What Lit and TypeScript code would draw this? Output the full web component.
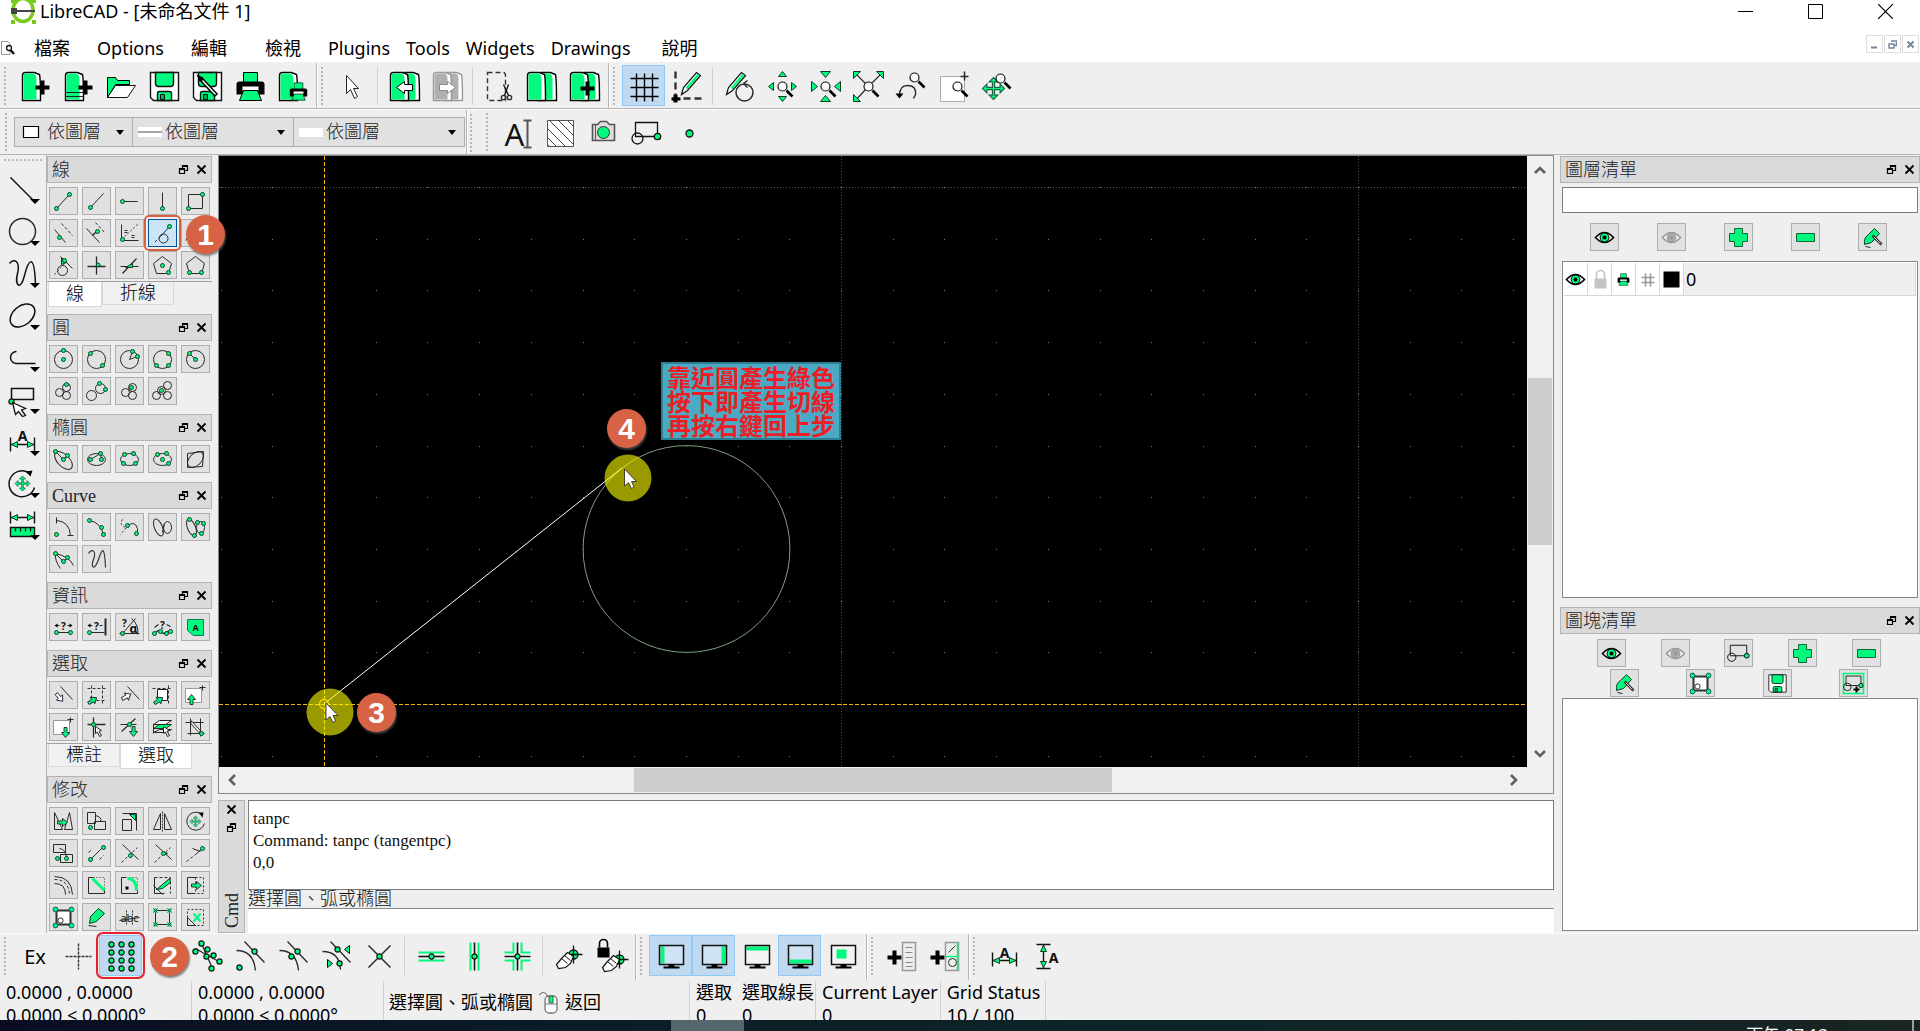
import { LitElement, html, svg, css } from "lit";
import { customElement, property } from "lit/decorators.js";
import { classMap } from "lit/directives/class-map.js";

/* ---- drawing helpers: every icon is drawn around the point 0,0 ---- */
const GREEN = "#00fa7d";
const L = (d: string, w = 1, c = "#2a2a2a") => svg`<path d=${d} fill="none" stroke=${c} stroke-width=${w}></path>`;
const D = (d: string, w = 1, a = "3 2") => svg`<path d=${d} fill="none" stroke="#333" stroke-width=${w} stroke-dasharray=${a}></path>`;
const G = (d: string, c = "#123b26") => svg`<path d=${d} fill=${GREEN} stroke=${c} stroke-width="1"></path>`;
const GL = (d: string, w = 2) => svg`<path d=${d} fill="none" stroke=${GREEN} stroke-width=${w}></path>`;
const B = (d: string) => svg`<path d=${d} fill="#000"></path>`;
const W = (d: string, c = "#222") => svg`<path d=${d} fill="#fff" stroke=${c} stroke-width="1"></path>`;
const C = (x: number, y: number, r: number, w = 1) => svg`<circle cx=${x} cy=${y} r=${r} fill="none" stroke="#2a2a2a" stroke-width=${w}></circle>`;
const E = (x: number, y: number, rx: number, ry: number, rot = 0) =>
  svg`<ellipse cx=${x} cy=${y} rx=${rx} ry=${ry} transform=${`rotate(${rot} ${x} ${y})`} fill="none" stroke="#2a2a2a"></ellipse>`;
const P = (...n: number[]) => {
  const out = [];
  for (let i = 0; i < n.length; i += 2) out.push(svg`<circle cx=${n[i]} cy=${n[i + 1]} r="2" fill=${GREEN} stroke="#14442b"></circle>`);
  return out;
};
const Q = (...n: number[]) => {
  const out = [];
  for (let i = 0; i < n.length; i += 2) out.push(svg`<circle cx=${n[i]} cy=${n[i + 1]} r="2.6" fill=${GREEN} stroke="#111" stroke-width="1.2"></circle>`);
  return out;
};
const T = (x: number, y: number, s: number, t: string, wt = "700") =>
  svg`<text x=${x} y=${y} font-size=${s} font-weight=${wt} text-anchor="middle" font-family="Noto Sans, Liberation Sans, sans-serif" fill="#111">${t}</text>`;

const page = (x: number, c = GREEN, s = "#000") => svg`
  <path d=${`M${x} -11Q${x} -14 ${x + 3} -14H${x + 12}L${x + 17} -12Q${x + 18} -8 ${x + 18} 14H${x}Z`} fill="#fff" stroke=${s} stroke-width="1.4"></path>
  <path d=${`M${x + 1} -11Q${x + 1} -13 ${x + 4} -13H${x + 11}Q${x + 14} -12 ${x + 14} -7V13H${x + 1}Z`} fill=${c}></path>`;
const plus = (x: number, y: number) => B(`M${x - 2} ${y - 7}h4v5h5v4h-5v5h-4v-5h-5v-4h5z`);
const floppy = (k: number) => svg`<g transform=${`scale(${k})`}>
  <path d="M-14 -14H14V14H-11L-14 11Z" fill="#fff" stroke="#111" stroke-width="1.4"></path>
  <path d="M-9 -14H9V-3Q9 0 6 0H-6Q-9 0 -9 -3Z" fill=${GREEN} stroke="#111" stroke-width="1.4"></path>
  <path d="M-7 14V7Q-7 5 -5 5H5Q7 5 7 7V14Z" fill=${GREEN} stroke="#111" stroke-width="1.4"></path>
  <path d="M-4 8h4v5h-4z" fill="#0a6" stroke="#111"></path></g>`;
const printer = (k: number, x = 0, y = 0) => svg`<g transform=${`translate(${x} ${y}) scale(${k})`}>
  <path d="M-7 -14H7V-3H-7Z" fill=${GREEN} stroke="#000"></path>
  <path d="M-14 -2Q-14 -5 -11 -5H11Q14 -5 14 -2V8H-14Z" fill="#000"></path>
  <path d="M-8 0H8V4H-8Z" fill="#fff"></path><path d="M-7 4H7L11 14H-11Z" fill=${GREEN} stroke="#000"></path></g>`;
const lens = (x: number, y: number) => svg`<path d=${`M${x + 4} ${y + 4}L${x + 10} ${y + 10}`} stroke="#000" stroke-width="2.6"></path>
  <circle cx=${x} cy=${y} r="4.5" fill="#fff" fill-opacity=".7" stroke="#111" stroke-width="1.2"></circle>`;
const pencil = (x: number, y: number) => svg`<path d=${`M${x} ${y}l2 -7L${x + 15} ${y - 22}l4 3L${x + 6} ${y - 4}Z`} fill="#fff" stroke="#111" stroke-width="1.2"></path>
  <path d=${`M${x + 5} ${y - 6}L${x + 17} ${y - 20}`} stroke=${GREEN} stroke-width="2.6"></path>`;
const monitor = (d: string) => [
  svg`<path d="M-12 -11H12V8H-12Z" fill="#fff" fill-opacity=".25" stroke="none"></path><path d=${d} fill=${GREEN}></path>
  <path d="M-12 -11H12V8H-12Z" fill="none" stroke="#111" stroke-width="1.5"></path>`,
  B("M-3 8H3V10H8V12H-8V10H-3Z"),
];
const ptr = (x: number, y: number, r = 0) => svg`<path transform=${`translate(${x} ${y}) rotate(${r})`} d="M0 0L6 4L3.6 4.8L6 9L4 10L2 5.6L0 7Z" fill="#fff" stroke="#222"></path>`;
const arrow = (x: number, y: number, r: number, c = GREEN) => svg`<path transform=${`translate(${x} ${y}) rotate(${r})`} d="M-5 -1.5H0V-4L5 0L0 4V1.5H-5Z" fill=${c} stroke="#223" stroke-width=".9"></path>`;
const eye = (g: string, s: string) => svg`<path d="M-9 0Q0 -10 9 0Q0 10 -9 0Z" fill="#fff" fill-opacity=".6" stroke=${s} stroke-width="1.6"></path>
  <circle r="4.4" fill=${g} stroke=${s}></circle><circle r="2" fill=${s}></circle>`;
const padlock = (x: number, y: number, c: string) => svg`<path d=${`M${x - 4} ${y}v-4a4 4 0 0 1 8 0v4`} fill="none" stroke=${c} stroke-width="1.6"></path>
  <path d=${`M${x - 6} ${y}h12v10h-12z`} fill=${c}></path>`;
const hand = (x: number, y: number) => svg`<path transform=${`translate(${x} ${y})`} d="M0 0L6 -6L9 -4L12 -2L9 5L4 9L-3 10L-5 6Z" fill="#fff" stroke="#111" stroke-width="1.2"></path><path d=${`M${x + 3} ${y - 3}l6 5M${x} ${y}l6 5`} stroke="#111"></path>`;
const target = (x: number, y: number) => [svg`<circle cx=${x} cy=${y} r="4.5" fill=${GREEN} stroke="#111" stroke-width="1.3"></circle>`, L(`M${x - 8} ${y}h17M${x} ${y - 9}v18`, 1.3, "#111")];
const blockShape = (k = 1) => svg`<g transform=${`scale(${k})`} fill="none" stroke="#111" stroke-width="1.3"><path d="M-11 -11H11V3H-11Z"></path><circle cx="-9" cy="5" r="5.5"></circle>
  <circle cx="11" cy="3" r="3.2" fill=${GREEN}></circle></g>`;
const cross4 = (x: number, y: number, k: number) => svg`<path transform=${`translate(${x} ${y}) scale(${k})`} d="M0 -10L4 -6H1V-1H6V-4L10 0L6 4V1H1V6H4L0 10L-4 6H-1V1H-6V4L-10 0L-6 -4V-1H-1V-6H-4Z" fill=${GREEN} stroke="#164" stroke-width="1"></path>`;
const pent = "M0 -9L9 -2L6 8H-6L-9 -2Z";
const corner = (x: number, y: number) => svg`<circle cx=${x} cy=${y} r="2.4" fill=${GREEN} stroke="#155"></circle>`;
const blockEdit = [svg`<path d="M-7 -7H7V7H-7Z" fill="#fff" stroke="#333" stroke-width="2"></path>`, corner(-8, -8), corner(8, -8), corner(-8, 8), corner(8, 8), C(-3, 3, 2.6)];
const marker = [G("M-8 7Q-9 0 -4 -3L2 -9L7 -4L-1 5Z"), L("M-7 9L-2 10"), L("M0 -2L9 7", 2.6), L("M1 -1L8 6", 1, "#ddd")];

const ICONS: Record<string, unknown> = {
  /* file tools */
  new: [page(-13), plus(7, 1)],
  template: [page(-13), W("M-13 6H5M-13 10H5"), plus(7, 1)],
  open: [G("M-14 11V-9H-6L-4 -6H8V-2H-6Z", "#000"), W("M-14 11L-6 -1H14L6 11Z", "#111")],
  save: floppy(1),
  saveas: [floppy(1), svg`<path d="M-7 -8L9 9" stroke="#000" stroke-width="4.4"></path><path d="M-5 -6L8 8" stroke="#fff" stroke-width="1.4"></path>`, B("M-11 -12L-4 -9L-8 -5Z")],
  print: printer(1),
  preview: [page(-14), printer(0.62, 5, 5)],
  pointer: W("M-6 -11V7L-2 3L2 12L5 10L1 2H6Z"),
  undo: [page(-3), page(-14), W("M-8 1L0 -5V-2H8V4H0V7Z", "#000")],
  redo: [page(-3, "#b0b0b0", "#999"), page(-14, "#b0b0b0", "#999"), W("M8 1L0 -5V-2H-8V4H0V7Z", "#888")],
  cut: [D("M-12 -14H4Q6 -14 6 -10V14H-12Z", 1.4, "5 3"), L("M4 -2L9 9M9 -2L5 9", 1.3, "#111"), C(4, 11, 2.2, 1.3), C(10, 11, 2.2, 1.3)],
  copy: [page(-4), page(-15)],
  paste: [page(-4), page(-15), plus(2, 2)],
  grid: L("M-14 -8H14M-14 1H14M-14 10H14M-8 -13V15M0 -13V15M8 -13V15", 1.4, "#000"),
  draft: [D("M-12 -15V9", 2.4, "7 4"), D("M-15 12H14", 2.6, "7 4"), B("M-14 8h4v3h3v3h-3v2h-4v-2h-2v-3h2z"), pencil(-6, 8)],
  redraw: [C(5, 6, 8.5, 1.5), L("M4 -3L8 -6M4 -3L8 1", 1.5), pencil(-13, 8)],
  zoomin: [G("M0 -15L4 -10H-4ZM0 15L4 10H-4ZM-14 0L-9 -4V4ZM14 0L9 -4V4Z"), lens(0, 0)],
  zoomout: [G("M0 -9L5 -15H-5ZM0 9L5 15H-5ZM-8 0L-14 -5V5ZM9 0L15 -5V5Z"), lens(0, 0)],
  zoomauto: [L("M-13 -13L-3 -3M13 -13L3 -3M-3 3L-13 14", 1.2), G("M-15 -15H-8L-15 -8ZM15 -15H8L15 -8ZM-15 15V8L-8 15Z"), lens(0, 0)],
  zoomprev: [L("M-12 9Q-12 -1 -4 -1Q5 -1 4 8L2 12", 1.4), B("M-16 7H-8L-12 12Z"), lens(3, -9)],
  zoomwin: [svg`<path d="M-14 -10H10V15H-14Z" fill="#fff" stroke="#aaa"></path>`, L("M10 -15V-6M6 -10H14", 1.5), lens(3, 0)],
  pan: [cross4(-4, 2, 1.1), lens(3, -8)],
  text: [T(-3, 12, 31, "A", "400"), L("M6 -13H14M10 -13V14M6 14H14", 2, "#555")],
  hatch: [W("M-13 -13H13V13H-13Z", "#555"), L("M-13 -5L5 13M-13 4L-4 13M-11 -13L13 11M-2 -13L13 2M7 -13L13 -7M-13 11L-11 13", 1, "#444")],
  image: [svg`<path d="M-11 -9H-6L-3 -12H3L6 -9H11V7H-11Z" fill="#ddd" stroke="#555" stroke-width="1.6"></path><circle cy="-1" r="6" fill=${GREEN} stroke="#333"></circle>`, L("M-8 -9V7", 1, "#555")],
  block: blockShape(1),
  point: svg`<circle r="3.5" fill=${GREEN} stroke="#111" stroke-width="1.3"></circle>`,
  /* left bar */
  vline: L("M-12 -12L12 12", 1.5, "#111"),
  vcircle: C(0, 0, 13, 1.5),
  vcurve: L("M-13 -10C-8 -16 -2 -12 -5 0S-2 18 2 2S12 -22 13 12", 1.5, "#111"),
  vellipse: svg`<ellipse rx="14" ry="9.5" transform="rotate(-40)" fill="none" stroke="#111" stroke-width="1.5"></ellipse>`,
  vpoly: L("M13 6H-6A6 6 0 0 1 -6 -6", 1.5, "#111"),
  vselect: [L("M-11 -11H11V0H-11Z", 1.5, "#111"), Q(-11, 2), svg`<path d="M-10 3L3 9L-1 10.500L3 16L0 17L-4 12L-7 15Z" fill="#fff" stroke="#111" stroke-width="1.3"></path>`],
  vdim: [T(0, -1, 14, "A"), L("M-12 -4V10M12 -4V10M-12 3H12", 1.4, "#111"), G("M-11 3L-5 0V6ZM11 3L5 0V6Z")],
  vmodify: [L("M12 4A13 13 0 1 1 6 -11", 1.5, "#111"), B("M3 -12L10 -13L8 -7Z"), cross4(0, 0, 0.75)],
  vmeasure: [L("M-12 -14V-2M12 -14V-2M-12 -8H12", 1.4, "#111"), G("M-11 -8L-5 -11V-5ZM11 -8L5 -11V-5Z"), svg`<path d="M-12 2H12V11H-12Z" fill=${GREEN} stroke="#111" stroke-width="1.4"></path>`, L("M-7 2V6M-2 2V6M3 2V6M8 2V6", 1.3, "#111")],
  /* lines */
  l1: [L("M-7 7L6 -7"), P(-7, 7, 6, -7)],
  l2: [L("M-6 6L7 -8"), P(-6, 6)],
  l3: [L("M-7 0H8"), P(-7, 0)],
  l4: [L("M0 -9V7"), P(0, 7)],
  l5: [L("M-7 -7H7V7H-7Z"), P(7, -7, -7, 7)],
  l6: [L("M-9 -4L2 9"), D("M-2 -10L9 2"), P(-4, 4)],
  l7: [L("M-10 -5L3 9"), D("M-1 -11L9 0"), L("M-4 2L1 -3", 1.4), P(1, -2)],
  l8: [L("M-8 -9V7H9"), D("M-8 6L8 -9", 1, "2 2"), L("M-5 -3H-2M-5 -1H-2M2 2H5M2 4H5"), P(-7, 6)],
  l9: [L("M7 -7L-2 3"), D("M-2 3L-9 10"), C(1, 5, 4.5), P(7, -7)],
  l10: [L("M-10 7L4 -9"), C(-4, 0, 4), C(5, 4, 4)],
  l11: [C(-1, 5, 5), L("M-3 -9L9 3"), D("M-9 9L4 -5", 1, "2 2"), G("M-2 -8L3 -3L-2 -1Z"), P(1, -5)],
  l12: [L("M-9 1H9M0 -9V9", 1.3), G("M0 1V-3Q4 -3 4 1Z")],
  l13: [L("M-9 1H9M-7 8L7 -7", 1.2), G("M-4 2H3V-2Z")],
  l14: [L(pent), P(0, 0, 6, 7)],
  l15: [L(pent), P(-6, 7, 6, 7)],
  /* circles */
  c1: [C(0, 0, 9), P(0, 0, 0, -9)],
  c2: [C(0, 0, 9), P(-6, -6, 6, 6)],
  c3: [C(0, 0, 9), L("M3 -8L0 0L8 -3"), P(3, -8, 8, -3)],
  c4: [C(0, 0, 9), P(6, -6, -6, 6, 6, 6)],
  c5: [C(0, 0, 9), L("M-6 -6L0 0"), P(-6, -6, 0, 0)],
  c6: [C(-4, 1, 4), C(3, 4, 4), C(3, -4, 4), P(3, -7)],
  c7: [C(-5, 4, 5), C(4, -3, 5), P(3, -8, 9, -2)],
  c8: [C(-4, 1, 4), C(3, 4, 4), C(3, -4, 4), P(2, -4)],
  c9: [C(-6, 4, 4), C(5, -6, 4), C(5, 4, 4), C(-1, -1, 4), P(-1, -1)],
  /* ellipses */
  e1: [E(0, 1, 11, 6, 45), L("M-8 -8L0 0L4 -4"), P(-8, -8, 4, -4, 0, 0)],
  e2: [E(0, 0, 9, 6), L("M-6 0L4 -6L5 0"), P(-6, 0, 4, -6, 5, 0)],
  e3: [E(0, 0, 9, 6), P(-5, -5, 4, -6, -6, 4, 6, 4)],
  e4: [E(0, 0, 9, 6), P(-5, -5, 4, -6, 0, 0, 6, 4)],
  e5: [L("M-8 -6L8 -8L7 7L-8 8Z"), E(0, 0, 9.5, 6, -45)],
  /* curves */
  k1: [L("M-7 -7Q6 -6 7 8M-7 -10V-4M4 8H10"), P(-7, 7)],
  k2: [L("M-7 -7Q4 -5 7 7"), P(-7, -7, 5, 0, 7, 7)],
  k3: [D("M-7 -8Q-11 -2 -3 0L-9 7", 1, "2 2"), L("M-2 -1Q5 -8 8 1V6"), P(-2, -2, 7, 6)],
  k4: [E(-4, 0, 4, 9, -22), E(5, 0, 4, 6, 0), L("M0 5L2 -4")],
  k5: [E(-4, 0, 4, 9, -22), E(5, 0, 4, 6, 0), P(-6, -8, 2, -5, 8, -4, -1, 8, 6, 6)],
  k6: [L("M-3 9Q-9 1 -8 -6Q6 -3 10 6M-8 -6L0 2L4 -2"), P(-8, -6, 4, -2, 0, 2)],
  k7: L("M-8 -6C-4 -12 0 -8 -3 0S-2 12 2 0S8 -14 9 8", 1.1),
  /* info */
  i1: [T(0, 2, 10, "?"), L("M-7 5H7M-8 -2H-4M4 -2H8"), B("M-9 -2L-6 -4V0ZM9 -2L6 -4V0Z"), P(-7, 5, 7, 5)],
  i2: [T(0, 2, 10, "?"), L("M-7 5H8M-8 -2H-4M3 -2H6"), L("M9 -9V8", 2), B("M-9 -2L-6 -4V0Z"), P(-7, 5)],
  i3: [T(-5, -1, 10, "?"), T(4, 5, 12, "α"), L("M-10 6H10M-8 7L6 -9M2 -9Q10 -2 8 7"), P(-7, 6)],
  i4: [T(0, 1, 10, "?"), L("M-9 6L-4 3L1 6L5 4L9 5M-8 0L-4 -3M4 -3L8 -1", 1.2), P(-8, 6, -2, 4, 4, 6, 8, 4)],
  i5: [G("M-8 -8H8V8H-2L-8 3Z", "#175"), T(0, 3, 9, "A")],
  /* select */
  s1: [L("M-3 -9L9 4"), arrow(-4, 2, 50, "#fff")],
  s2: [D("M-9 -7H9M-5 -10V8M6 -10V9M-5 5H9"), arrow(-4, 5, -35)],
  s3: [L("M-2 -9L10 4"), arrow(-3, 1, -30, "#fff")],
  s4: [D("M-10 -7H10M6 -10V10"), W("M-5 -6H5V5H-5Z"), arrow(-4, 5, -35)],
  s5: [svg`<path d="M-10 -7H6V7H-10Z" fill="#fff" stroke="#999"></path>`, L("M7 -10V-5M4 -8H10"), arrow(-4, 4, -90)],
  s6: [svg`<path d="M-10 -7H6V7H-10Z" fill="#fff" stroke="#999"></path>`, L("M7 -10V-5M4 -8H10"), arrow(2, 5, 90)],
  s7: [L("M-9 -3H9M-3 -10V10", 1.3), P(-3, -3), ptr(-1, -1)],
  s8: [L("M-9 -3H7M-8 4L6 -9", 1.2), P(0, -3), arrow(4, 4, 90)],
  s9: [G("M-9 1L-3 -3H9L3 1Z"), W("M-9 -3L-3 -7H9L3 -3Z"), L("M-9 5L-3 2H9L3 5ZM-9 -3V6"), ptr(1, -1)],
  s10: [L("M-10 -5H8M-5 -9V8M5 -9V9M-8 6H9"), L("M-5 -6L5 5", 3), L("M-4 -5L4 4", 1.4, "#fff"), P(6, 6)],
  /* modify */
  m1: [L("M-9 8V-9L-1 8ZM1 8L6 -9L9 8Z"), arrow(-1, 1, 0)],
  m2: [L("M-9 -9H-1V2H-9ZM-2 0H9V8H-2ZM-1 -6Q6 -4 4 0"), P(-6, 6)],
  m3: [L("M-7 -2H2V9H-7ZM-7 -8H7V9"), G("M0 -7H6V-1Z")],
  m4: [L("M-2 8V-8L-9 8ZM2 8V-8L9 8Z"), D("M0 -10V10", 1, "2 1")],
  m5: [L("M9 2A9 9 0 1 1 5 -8"), B("M3 -9L8 -9L7 -4Z"), cross4(0, 0, 0.55)],
  m6: [L("M-10 -9H2V-1H-10ZM-3 1H9V9H-3ZM-4 -5Q3 -4 3 5"), P(-6, 5, 3, 5)],
  m7: [L("M-6 6L6 -6"), D("M-8 -1L-4 -4M3 6L7 2"), P(-6, 6, 7, -6)],
  m8: [L("M-7 -9L9 6"), D("M-8 9L8 -6"), P(1, 2)],
  m9: [L("M-7 -9L9 6"), D("M-8 9L8 -6"), L("M0 0H5", 2), P(1, 0)],
  m10: [D("M-9 8L0 1"), L("M0 1L7 -5M-3 -5L5 -2"), P(7, -5)],
  m11: [L("M-9 -9Q8 -9 9 9M-9 -2Q2 -2 2 9"), D("M-9 -6Q5 -6 6 9")],
  m12: [L("M-8 -8H-3M-8 -8V8H8V4"), D("M-3 -8H8V4", 1, "1 2"), GL("M-4 -7L8 5", 3)],
  m13: [L("M-8 -8H-3M-8 -8V8H8V4"), D("M0 -8H8V0", 1, "1 2"), GL("M-2 -7Q7 -7 7 5", 3), B("M-4 1h3v3h-3z")],
  m14: [D("M-8 -8H8V8"), L("M-9 0L0 9M-8 -8V8H2"), G("M-6 4L7 -7L8 -3L0 3Z")],
  m15: [L("M0 -8H-8V8H0"), D("M0 -8H8V8H0M0 -8V8", 1, "2 2"), arrow(1, 0, 0)],
  m16: blockEdit,
  m17: [G("M-7 6L-6 -1L2 -9L8 -4L0 4Z"), L("M-8 8L0 9")],
  m18: [T(0, 4, 11, "abc", "400"), D("M-3 -7V8M3 -7V8", 1, "2 1"), L("M-10 3L10 0", 1)],
  m19: [L("M-7 -7H7V7H-7Z"), ...[-7, 7].flatMap((x) => [-7, 7].map((y) => [svg`<path d=${`M${x - 2} ${y - 2}h4v4h-4z`} fill=${GREEN}></path>`, L(`M${x - 2} ${y - 2}l4 4m0 -4l-4 4`, 0.8)]))],
  m20: [D("M-8 -8H8V8H-8Z", 1, "2 2"), L("M-8 0L0 8H-8Z"), GL("M-2 -4L5 4M5 -4L-2 4", 2)],
  /* snap bar */
  cross: D("M-13 0H13M0 -13V13", 1.4, "3 1"),
  sgrid: [-10, 0, 10].flatMap((x) => [-12, -4, 4, 12].map((y) => Q(x, y))),
  send: [L("M-12 10L12 -10"), Q(-10, -6, 10, 12)],
  sent: [L("M-12 -8L13 6M-6 -13L5 12", 1.3), Q(-12, -5, -6, -13, 0, -7, -1, 0, 6, -1, 12, 5, 4, 12)],
  scen: [L("M-14 -6Q3 -6 5 14M-6 -15L14 6", 1.3), Q(-11, 11, 4, -5)],
  smid: [L("M-14 -6Q3 -6 5 14M-6 -15L14 6", 1.3), Q(-2, 0, 4, -5)],
  sdist: [L("M-14 -5Q3 -5 4 13M-6 -15L14 6", 1.3), Q(1, -7, 3, 7), G("M8 -7L13 -11V-3ZM-4 7L-9 3V11Z", "#111")],
  sint: [L("M-11 -11L11 11M11 -11L-11 11", 1.5), Q(0, 0)],
  rh: [GL("M-13 -4H13M-13 4H13"), L("M-13 0H13", 1.6, "#111"), Q(0, 0)],
  rv: [GL("M-4 -14V14M4 -14V14"), L("M0 -14V14", 1.6, "#111"), Q(0, 0)],
  ro: [GL("M-13 -4H-4V-14M4 -14V-4H13M-13 4H-4V14M4 14V4H13"), L("M-13 0H13M0 -14V14", 1.6, "#111"), Q(0, 0)],
  zero: [target(4, -2), hand(-8, 2)],
  zlock: [padlock(-9, -9, "#000"), target(7, 3), hand(-5, 5)],
  d1: monitor("M-11 -10H-7V7H-11Z"),
  d2: monitor("M7 -10H11V7H7Z"),
  d3: monitor("M-11 -10H11V-6H-11Z"),
  d4: monitor("M-11 3H11V7H-11Z"),
  d5: monitor("M-7 -7H3V2H-7Z"),
  w1: [plus(-8, 1), svg`<path d="M0 -14H13V14H0Z" fill="#eee" stroke="#999" stroke-width="1.5"></path>`, L("M3 -9H10M3 -4H10M3 1H10M3 6H10M3 10H10", 1, "#888")],
  w2: [plus(-8, 1), svg`<path d="M0 -14H13V14H0Z" fill="#eee" stroke="#999" stroke-width="1.5"></path>`, GL("M0 0H13M12 -14V14", 1.6), L("M3 -4L10 -11"), C(7, 6, 4)],
  x1: [T(0, 1, 14, "A"), L("M-12 -4V10M12 -4V10M-12 4H12", 1.4, "#111"), G("M-11 4L-5 1V7ZM11 4L5 1V7Z")],
  x2: [T(6, 6, 14, "A"), L("M-11 -12H3M-11 12H3M-4 -12V12", 1.4, "#111"), G("M-4 -11L-7 -5H-1ZM-4 11L-7 5H-1Z")],
  /* panels */
  eye: eye(GREEN, "#000"),
  eyeoff: eye("#aaa", "#999"),
  add: G("M-4 -9H4V-4H9V4H4V9H-4V4H-9V-4H-4Z", "#163"),
  remove: G("M-9 -4H9V4H-9Z", "#163"),
  edit: marker,
  bblock: blockShape(0.75),
  bsave: floppy(0.62),
  binsert: [GL("M-10 -10H10V10H-10Z", 1.6), blockShape(0.68), L("M3 3V9M0 6H6", 2, "#000")],
  lock: svg`<g transform="translate(1 0)">${padlock(0, -1, "#c4c4c4")}</g>`,
  lprint: printer(0.42),
  hash: L("M-6 -2H7M-6 3H7M-2 -6V7M3 -6V7", 1.6, "#999"),
  swatch: B("M-8 -8H8V8H-8Z"),
  float: svg`<path d="M-1 -1V-4H4V1H1M-4 -1H1V4H-4Z" fill="none" stroke="#000" stroke-width="1.2"></path><path d="M-1.500 -3.500H4.500M-4.500 -0.500H1.500" stroke="#000" stroke-width="2"></path>`,
  close: L("M-4 -4L4 4M4 -4L-4 4", 1.8, "#000"),
};

@customElement("cad-icon")
class CadIcon extends LitElement {
  @property() name = "";
  @property({ type: Number }) size = 19;
  static styles = css`
    :host { display: inline-flex; flex: none; }
    svg { display: block; overflow: visible; }
  `;
  render() {
    const s = this.size;
    const o = -Math.floor((s - 1) / 2) - 0.5;
    return html`<svg width=${s} height=${s} viewBox=${`${o} ${o} ${s} ${s}`} aria-hidden="true">${ICONS[this.name]}</svg>`;
  }
}

@customElement("cad-dock-title")
class CadDockTitle extends LitElement {
  @property() label = "";
  static styles = css`
    :host { display: flex; align-items: center; box-sizing: border-box; height: 27px; border: 1px solid #b4b4b4; background: #dadada; padding: 0 0 0 4px;
      font: 300 18px/24px "Liberation Serif", "Noto Sans CJK TC", serif; color: #222; }
    .label { flex: 1; font-weight: inherit; }
    button { all: unset; width: 18px; height: 20px; display: flex; align-items: center; justify-content: center; }
  `;
  render() {
    return html`<span class="label">${this.label}</span>
      <button aria-label="Float"><cad-icon name="float" size="10"></cad-icon></button>
      <button aria-label="Close"><cad-icon name="close" size="10"></cad-icon></button>`;
  }
}

interface Dock { title: string; icons: string[]; tabs?: string[]; active?: number }
const seq = (p: string, n: number) => Array.from({ length: n }, (_, i) => p + (i + 1));
const DOCKS: Dock[] = [
  { title: "線", icons: seq("l", 15), tabs: ["線", "折線"], active: 0 },
  { title: "圓", icons: seq("c", 9) },
  { title: "橢圓", icons: seq("e", 5) },
  { title: "Curve", icons: seq("k", 7) },
  { title: "資訊", icons: seq("i", 5) },
  { title: "選取", icons: seq("s", 10), tabs: ["標註", "選取"], active: 1 },
  { title: "修改", icons: seq("m", 20) },
];
const TOP = [
  ["new", "template", "open", "save", "saveas", "print", "preview"],
  ["pointer", "|", "undo", "redo", "|", "cut", "copy", "paste"],
  ["grid", "draft", "|", "redraw", "zoomin", "zoomout", "zoomauto", "zoomprev", "zoomwin", "pan"],
];
const BOTTOM = [
  ["Ex", "cross", "sgrid", "send", "sent", "scen", "smid", "sdist", "sint", "|", "rh", "rv", "ro", "|", "zero", "zlock"],
  ["d1", "d2", "d3", "d4", "d5"],
  ["w1", "w2"],
  ["x1", "x2"],
];
const CHECKED = new Set(["grid", "sgrid", "d1", "d2", "d4"]);
const MENUS = ["檔案", "Options", "編輯", "檢視", "Plugins", "Tools", "Widgets", "Drawings", "說明"];

@customElement("app-root")
class AppRoot extends LitElement {
  static styles = css`
    :host { display: flex; flex-direction: column; height: 100vh; overflow: hidden; background: #efefef; color: #000;
      font: 400 18px/24px "Noto Sans", "Noto Sans CJK TC", sans-serif; }
    * { box-sizing: border-box; }
    button { font: inherit; color: inherit; padding: 0; margin: 0; }

    .titlebar { display: flex; align-items: flex-start; height: 34px; background: #fff; padding-left: 11px; }
    .titlebar h1 { flex: 1; margin: 0 0 0 4px; font-size: 18px; font-weight: 400; line-height: 22px; }
    .win { border: 0; background: none; width: 70px; height: 23px; display: flex; align-items: center; justify-content: center; }
    .menubar { display: flex; align-items: center; height: 29px; background: #fff; border-bottom: 1px solid #f0f0f0; padding-left: 1px; }
    .menubar nav { flex: 1; display: flex; }
    .menu { border: 0; background: none; padding: 0 8px; font-size: 18px; line-height: 28px; }
    .menu.zh { padding: 0 19px; }
    .menu.zh:last-child { padding-left: 23px; }
    .mdi { display: flex; gap: 1px; padding-right: 1px; align-self: flex-start; margin-top: 1px; }
    .mdi button { width: 17px; height: 18px; background: #fff; border: 1px solid #ddd; display: flex; align-items: center; justify-content: center; }

    .bars { display: flex; height: 46px; border-bottom: 1px solid #b4b4b4; flex: none; }
    .bars + .bars { border-top: 1px solid #fafafa; }
    .bar { display: flex; align-items: center; padding: 0 2px 0 4px; }
    .bar + .bar { border-left: 1px solid #b4b4b4; box-shadow: inset 1px 0 #fff; }
    .grip { width: 2px; height: 38px; margin-right: 7px; background: repeating-linear-gradient(#b8b8b8 0 2px, transparent 2px 4px); }
    .sep { width: 1px; height: 38px; margin: 0 4px; background: #cfcfcf; }
    .tool { width: 43px; height: 41px; border: 1px solid transparent; background: none; display: flex; align-items: center; justify-content: center; padding: 2px 0 0 1px; position: relative; }
    .tool.on { background: #bfdaf0; border-color: #90c8f6; }
    .ex { font-size: 20px; }
    .combo { display: flex; align-items: center; height: 30px; border: 1px solid #adadad; background: #e1e1e1; padding: 0 8px 0 5px; gap: 5px; }
    .combo + .combo { border-left: 0; }
    .combo select { flex: 1; min-width: 0; appearance: none; border: 0; background: none; padding: 0; font: 300 18px/26px "Liberation Serif", "Noto Sans CJK TC", serif; color: #222; }
    .combo.c1 { width: 119px; } .combo.c2 { width: 161px; gap: 3px; } .combo.c3 { width: 171px; gap: 3px; }
    .pens { padding-left: 5px; padding-right: 1px; }
    .gripcell { width: 16px; border-left: 1px solid #b4b4b4; box-shadow: inset 1px 0 #fff; padding: 4px 0 0 3px; }
    .gripcell .grip { display: block; }

    .main { flex: 1; min-height: 0; display: grid; grid-template-columns: 47px 165px minmax(0, 1fr) 360px; }
    .vbar { border-right: 1px solid #b4b4b4; padding-top: 4px; display: flex; flex-direction: column; }
    .hgrip { height: 2px; margin: 0 4px 8px; background: repeating-linear-gradient(90deg, #b8b8b8 0 2px, transparent 2px 4px); }
    .vtool { height: 42px; border: 0; background: none; display: grid; place-items: center; position: relative; }
    .vtool::after { content: ""; position: absolute; right: 6px; bottom: 7px; border: 5px solid transparent; border-top-color: #000; border-bottom: 0; }
    .docks { padding-top: 1px; min-height: 0; position: relative; display: flex; flex-direction: column; gap: 9px; }
    .dock-grid { display: grid; grid-template-columns: repeat(5, 29px); gap: 4px; padding: 4px 0 0 2px; }
    .btn { width: 29px; height: 28px; border: 1px solid #adadad; background: #e1e1e1; display: flex; align-items: flex-start; justify-content: center; padding-top: 4px; position: relative; }
    .btn.on { background: #cce4f7; border-color: #005499; }
    .ring { position: absolute; inset: -5px; border: 2px solid #d8623f; border-radius: 5px; pointer-events: none; z-index: 2; }
    .ring.red { inset: -4px; border-color: #e8202c; border-radius: 7px; }
    .tabs { display: flex; align-items: flex-start; margin: 2px 0 -1px; border-top: 1px solid #a0a0a0; height: 25px; padding-left: 1px; }
    .tab { border: 1px solid #d9d9d9; border-top: 0; background: #f0f0f0; padding: 0 17px; height: 23px; font: 300 18px/20px "Liberation Serif", "Noto Sans CJK TC", serif; }
    .tab.on { background: #fff; height: 25px; }
    .badge { position: absolute; width: 39px; height: 39px; border-radius: 50%; background: #d86344; color: #fff; box-shadow: 1px 2px 2px rgba(90, 90, 90, 0.7);
      font: 700 30px/39px "Liberation Sans", sans-serif; text-align: center; z-index: 3; }
    .b1 { left: 139px; top: 60px; }
    .b2 { left: 50px; top: 1px; }
    .b3 { left: 138px; top: 537px; }
    .b4 { left: 388px; top: 253px; }

    .center { display: flex; flex-direction: column; gap: 6px; padding: 0 6px 0 6px; min-height: 0; }
    .view { flex: 1; min-height: 0; display: grid; grid-template: minmax(0, 1fr) 26px / minmax(0, 1fr) 26px; border: 1px solid #828790; background: #f0f0f0; }
    .canvas { position: relative; background: #000; overflow: hidden; }
    .canvas svg { display: block; width: 100%; height: 100%; }
    .note { position: absolute; left: 442px; top: 206px; border: 2px solid #2d7d93; background: #4ba9c4; color: #ee1c24; padding: 1px 4px;
      font: 700 24px/24px "Noto Sans CJK TC", sans-serif; white-space: nowrap; }
    .sv { display: flex; flex-direction: column; align-items: center; padding: 8px 1px 7px; }
    .sh { display: flex; align-items: center; padding: 1px 7px; }
    .room { flex: 1; display: flex; align-self: stretch; }
    .sv .room { flex-direction: column; }
    .thumb { background: #cdcdcd; }
    .sv .lead { flex: 202; } .sv .thumb { flex: 167; } .sv .tail { flex: 203; }
    .sh .lead { flex: 396; } .sh .thumb { flex: 478; } .sh .tail { flex: 396; }

    .cmd { height: 133px; flex: none; display: flex; gap: 3px; }
    .cmdbar { width: 27px; border: 1px solid #b4b4b4; background: #dadada; display: flex; flex-direction: column; align-items: center; gap: 8px; padding: 4px 0; }
    .cmdbar button { border: 0; background: none; height: 10px; display: flex; }
    .cmdbar span { writing-mode: vertical-rl; transform: rotate(180deg); margin-top: auto; font: 18px/24px "Liberation Serif", serif; color: #222; }
    .cmdbody { flex: 1; display: flex; flex-direction: column; font: 17px/22px "Liberation Serif", "Noto Sans CJK TC", serif; color: #111; }
    .log { height: 90px; border: 1px solid #7a7a7a; background: #fff; padding: 7px 4px; white-space: pre-line; }
    .cmdbody label { font-size: 18px; line-height: 19px; height: 18px; font-weight: 300; }
    .cmdbody input { flex: 1; min-height: 0; border: 0; border-top: 1px solid #8a8a8a; background: #fff; width: 100%; padding: 0 4px; font: inherit; outline: 0; }

    .right { display: flex; flex-direction: column; padding: 1px 0 2px; min-height: 0; }
    .right .pad { padding: 0 2px; display: flex; flex-direction: column; flex: 337 1 78px; min-height: 0; }
    .right .pad.blocks { flex: 233 1 64px; }
    .filter { height: 26px; margin: 4px 0 10px; border: 1px solid #7a7a7a; background: #fff; padding: 0 4px; font: inherit; outline: 0; flex: none; }
    .rowbtn { display: flex; justify-content: space-evenly; flex: none; }
    .rowbtn.layer { justify-content: center; gap: 38px; margin-bottom: 10px; padding-right: 4px; }
    .rowbtn.b1st { margin: 5px 0 2px; padding-right: 2px; }
    .rowbtn.b2nd { margin-bottom: 1px; padding-right: 2px; }
    .list { flex: 1; min-height: 0; border: 1px solid #828790; background: #fff; padding: 1px; }
    .gapd { height: 9px; flex: none; }
    table { border-collapse: separate; border-spacing: 0; table-layout: fixed; width: 100%; }
    td { height: 33px; padding: 0; border-right: 1px solid #d8d8d8; border-bottom: 1px solid #d8d8d8; }
    td.ic { width: 24px; padding-left: 2px; line-height: 0; }
    td.nm { background: #efefef; padding-left: 2px; font-size: 18px; }

    .bottom { border-top: 1px solid #fafafa; border-bottom: 0; height: 47px; }
    .bottom .bar { align-items: flex-start; padding-top: 1px; }
    .bottom .grip, .bottom .sep { margin-top: 2px; }
    .status { height: 40px; flex: none; overflow: hidden; display: flex; align-items: flex-start; font-size: 18px; line-height: 23px; padding-top: 1px; }
    .cell { height: 46px; padding: 0 2px 0 6px; border-right: 1px solid #d0d0d0; white-space: pre-line; flex: none; }
    .cell.w { width: 192px; }
    .cell.hint { width: 306px; display: flex; align-items: center; gap: 6px; padding: 0 5px; height: 42px; }
    .cell.pick { display: flex; gap: 10px; padding-right: 1px; }
    .cell.last { padding: 0 5px 0 6px; }
    .taskbar { height: 11px; flex: none; overflow: hidden; display: flex; background: linear-gradient(90deg, #0a0d22, #0b1c27 30%, #0c2527 60%, #1a2424); color: #fff; }
    .task { width: 73px; margin-left: 671px; background: #55676b; }
    .clock { margin-left: auto; padding: 5px 84px 0 0; font-size: 17px; line-height: 20px; white-space: nowrap; }
    .edge { width: 2px; background: #9a9fa0; margin-right: 6px; }
  `;

  private tool(n: string) {
    if (n === "|") return html`<span class="sep"></span>`;
    const on = CHECKED.has(n);
    return html`<button class=${classMap({ tool: true, on })} aria-label=${n}>
      ${n === "Ex" ? html`<span class="ex">Ex</span>` : html`<cad-icon name=${n} size="29"></cad-icon>`}
      ${n === "sgrid" ? html`<span class="ring red"></span><span class="badge b2">2</span>` : ""}
    </button>`;
  }
  private bar(items: string[]) {
    return html`<div class="bar" role="toolbar"><span class="grip"></span>${items.map((n) => this.tool(n))}</div>`;
  }
  private btn(n: string) {
    const on = n === "l9";
    return html`<button class=${classMap({ btn: true, on })} aria-label=${n}><cad-icon name=${n}></cad-icon>${on ? html`<span class="ring"></span>` : ""}</button>`;
  }
  private dock(d: Dock) {
    return html`<section>
      <cad-dock-title .label=${d.title}></cad-dock-title>
      <div class="dock-grid">${d.icons.map((n) => this.btn(n))}</div>
      ${d.tabs ? html`<div class="tabs" role="tablist">${d.tabs.map((t, i) => html`<button role="tab" class=${classMap({ tab: true, on: i === d.active })}>${t}</button>`)}</div>` : ""}
    </section>`;
  }
  private drawing() {
    const step = 51.7, ox = 105, oy = 548;
    let dots = "";
    for (let i = -2; i < 60; i++) for (let j = -8; j <= 10; j++) {
      dots += `M${Math.round(ox + i * step)} ${Math.round(oy - j * step)}h1v1h-1z`;
    }
    const majorX = [10, 20, 30].map((k) => Math.round(ox + k * step) + 0.5);
    const cursor = (x: number, y: number) => svg`<path transform=${`translate(${x} ${y})`} d="M0 0V17L4 13.500L7 19.500L9.500 18L7 12.500H12Z" fill="#fff" stroke="#222" stroke-width=".8"></path>`;
    return svg`<svg aria-hidden="true">
      <path d=${dots} fill="#7a7a7a" shape-rendering="crispEdges"></path>
      ${majorX.map((x) => svg`<line x1=${x} x2=${x} y1="0" y2="100%" stroke="#505050" stroke-dasharray="1 2"></line>`)}
      <line x1="0" x2="100%" y1="31.5" y2="31.5" stroke="#505050" stroke-dasharray="1 2"></line>
      <line x1="0" x2="100%" y1="548.5" y2="548.5" stroke="#f5b90a" stroke-dasharray="4 2"></line>
      <line x1="105.5" x2="105.5" y1="0" y2="100%" stroke="#f5b90a" stroke-dasharray="4 2"></line>
      <circle cx="467.500" cy="393" r="103.400" fill="none" stroke="#7f9f7f"></circle>
      <path d="M105 548L403 312" stroke="#fff" stroke-width="1"></path>
      <circle cx="105" cy="548" r="4.500" fill="none" stroke="#ff9a00" stroke-width="1.300"></circle>
      <circle cx="111" cy="556" r="23.500" fill="#ff0" fill-opacity=".6"></circle>
      <circle cx="409" cy="322" r="23.500" fill="#ff0" fill-opacity=".6"></circle>
      ${cursor(107, 547)}${cursor(405.5, 313)}
    </svg>`;
  }
  private chev(d: string) {
    return html`<svg width="12" height="12" viewBox="0 0 12 12" aria-hidden="true"><path d=${d} fill="none" stroke="#606060" stroke-width="2.6"></path></svg>`;
  }

  render() {
    return html`
      <header class="titlebar">
        <svg width="25" height="24" viewBox="0 0 25 24" aria-hidden="true">
          <path d="M0 0h5v3H0zM20 0h5v3h-5zM0 20h4v4H0zM21 20h4v4h-4z" fill="#78c81e"></path>
          <ellipse cx="12" cy="10" rx="10" ry="11.500" fill="#fff" stroke="#7acb1c" stroke-width="3.500"></ellipse>
          <path d="M0 8H6V10H24V12H6V14H0Z" fill="#444"></path>
        </svg>
        <h1>LibreCAD - [未命名文件 1]</h1>
        <button class="win" aria-label="Minimize"><svg width="15" height="15"><path d="M0 7.500H15" stroke="#000"></path></svg></button>
        <button class="win" aria-label="Maximize"><svg width="15" height="15"><path d="M.5 .5H14.500V14.500H.5Z" fill="none" stroke="#000"></path></svg></button>
        <button class="win" aria-label="Close window"><svg width="15" height="15"><path d="M0 0L15 15M15 0L0 15" stroke="#000" stroke-width="1.200"></path></svg></button>
      </header>
      <div class="menubar">
        <svg width="14" height="14" viewBox="0 0 14 14" aria-hidden="true"><path d="M.5 .5H7L9 3V13.500H.5Z" fill="#fff" stroke="#999"></path><circle cx="8" cy="7" r="2.500" fill="#fff" stroke="#111" stroke-width="1.300"></circle><path d="M9.500 9L13 13" stroke="#111" stroke-width="2.400"></path></svg>
        <nav>${MENUS.map((m) => html`<button class=${classMap({ menu: true, zh: m.charCodeAt(0) > 255 })}>${m}</button>`)}</nav>
        <div class="mdi">
          <button aria-label="Minimize document"><svg width="9" height="9"><path d="M1 7.500H7" stroke="#74849a" stroke-width="2"></path></svg></button>
          <button aria-label="Restore document"><svg width="9" height="9"><path d="M3 1H8.500V5.500H6M1 4H6V8H1Z" fill="none" stroke="#74849a" stroke-width="1.400"></path></svg></button>
          <button aria-label="Close document"><svg width="9" height="9"><path d="M1.500 1.500L7.500 7.500M7.500 1.500L1.500 7.500" stroke="#74849a" stroke-width="2"></path></svg></button>
        </div>
      </div>
      <div class="bars">${TOP.map((b) => this.bar(b))}</div>
      <div class="bars">
        <div class="bar pens"><span class="grip"></span>
          ${["c1", "c2", "c3"].map((c) => html`<div class="combo ${c}">
            ${c === "c1" ? html`<svg width="22" height="14" aria-hidden="true"><path d="M3.500 1.500H18.500V12.500H3.500Z" fill="#fff" stroke="#000" stroke-width="1.200"></path></svg>`
              : c === "c2" ? html`<svg width="24" height="10" aria-hidden="true"><path d="M0 0H24V10H0Z" fill="#fff"></path><path d="M0 5H24" stroke="#888" stroke-width="1.500"></path></svg>`
              : html`<svg width="24" height="9" aria-hidden="true"><path d="M0 0H24V9H0Z" fill="#fff"></path></svg>`}
            <select aria-label=${c === "c1" ? "顏色" : c === "c2" ? "線寬" : "線型"}><option>依圖層</option></select>
            <svg width="8" height="5" aria-hidden="true"><path d="M0 0H8L4 5Z"></path></svg>
          </div>`)}
        </div>
        <div class="gripcell"><span class="grip"></span></div>
        ${this.bar(["text", "hatch", "image", "block", "point"])}
      </div>

      <div class="main">
        <div class="vbar"><span class="hgrip"></span>
          ${["vline", "vcircle", "vcurve", "vellipse", "vpoly", "vselect", "vdim", "vmodify", "vmeasure"].map((n) => html`<button class="vtool" aria-label=${n}><cad-icon name=${n} size="28"></cad-icon></button>`)}
        </div>
        <div class="docks">${DOCKS.map((d) => this.dock(d))}<span class="badge b1">1</span></div>
        <div class="center">
          <div class="view">
            <div class="canvas">${this.drawing()}
              <div class="note">靠近圓產生綠色<br />按下即產生切線<br />再按右鍵回上步</div>
              <span class="badge b3">3</span><span class="badge b4">4</span>
            </div>
            <div class="sv">${this.chev("M1 9L6 4L11 9")}<div class="room"><div class="lead"></div><div class="thumb"></div><div class="tail"></div></div>${this.chev("M1 3L6 8L11 3")}</div>
            <div class="sh">${this.chev("M9 1L4 6L9 11")}<div class="room"><div class="lead"></div><div class="thumb"></div><div class="tail"></div></div>${this.chev("M3 1L8 6L3 11")}</div>
            <div></div>
          </div>
          <div class="cmd">
            <div class="cmdbar"><button aria-label="Close"><cad-icon name="close" size="10"></cad-icon></button><button aria-label="Float"><cad-icon name="float" size="10"></cad-icon></button><span>Cmd</span></div>
            <div class="cmdbody">
              <div class="log">tanpc
Command: tanpc (tangentpc)
0,0</div>
              <label for="cmdline">選擇圓、弧或橢圓</label>
              <input id="cmdline" type="text" />
            </div>
          </div>
        </div>
        <div class="right">
          <cad-dock-title label="圖層清單"></cad-dock-title>
          <div class="pad">
            <input class="filter" type="text" aria-label="圖層清單" />
            <div class="rowbtn layer">${["eye", "eyeoff", "add", "remove", "edit"].map((n) => this.btn(n))}</div>
            <div class="list"><table><tr>
              ${["eye", "lock", "lprint", "hash", "swatch"].map((n) => html`<td class="ic"><cad-icon name=${n} size="19"></cad-icon></td>`)}<td class="nm">0</td>
            </tr></table></div>
          </div>
          <div class="gapd"></div>
          <cad-dock-title label="圖塊清單"></cad-dock-title>
          <div class="pad blocks">
            <div class="rowbtn b1st">${["eye", "eyeoff", "bblock", "add", "remove"].map((n) => this.btn(n))}</div>
            <div class="rowbtn b2nd">${["edit", "m16", "bsave", "binsert"].map((n) => this.btn(n))}</div>
            <div class="list"></div>
          </div>
        </div>
      </div>

      <div class="bars bottom">${BOTTOM.map((b) => this.bar(b))}</div>
      <footer class="status">
        <div class="cell w">0.0000 , 0.0000
0.0000 &lt; 0.0000°</div>
        <div class="cell w">0.0000 , 0.0000
0.0000 &lt; 0.0000°</div>
        <div class="cell hint"><span>選擇圓、弧或橢圓</span>
          <svg width="20" height="24" viewBox="0 0 20 24" aria-hidden="true"><path d="M0 5Q5 0 8 5V8" fill="none" stroke="#555"></path><rect x="6" y="6" width="12" height="17" rx="4" fill="#fff" stroke="#777" stroke-width="1.300"></rect><path d="M10 6H14V13H10Z" fill="#00fa7d" stroke="#555"></path><path d="M6 14H18" stroke="#777"></path></svg>
          <span>返回</span></div>
        <div class="cell pick"><div>選取
0</div><div>選取線長
0</div></div>
        <div class="cell">Current Layer
0</div>
        <div class="cell last">Grid Status
10 / 100</div>
      </footer>
      <div class="taskbar"><div class="task"></div><div class="clock">下午 07:13</div><div class="edge"></div></div>
    `;
  }
}
